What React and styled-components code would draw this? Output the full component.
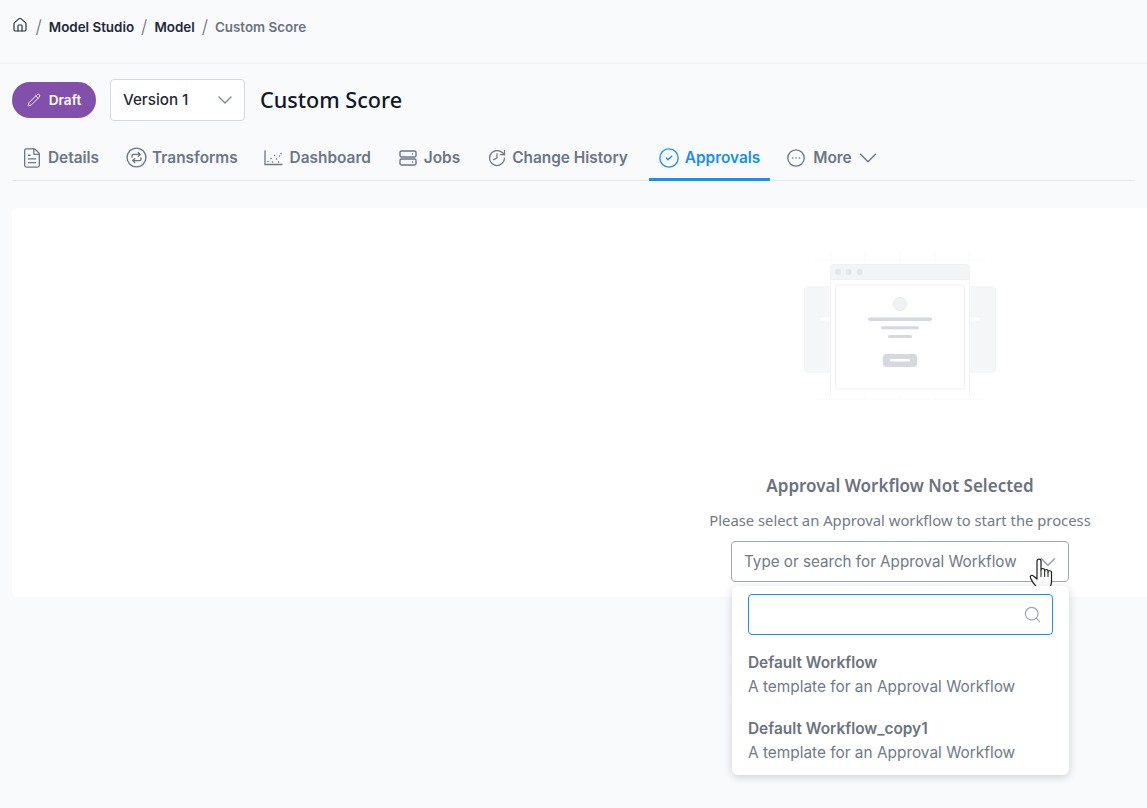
import React from 'react'
import styled, { createGlobalStyle } from 'styled-components'
import { ChevronDown, Search, Home, FileText, History, CircleCheck, Pencil } from 'lucide-react'

const Global = createGlobalStyle`
html,body{margin:0;padding:0;height:100%;overflow:hidden;background:#f9fafc;}
*{box-sizing:border-box;}
body{font-family:Inter,"Liberation Sans",sans-serif;}
`

const Page = styled.div`
width:1147px;
height:808px;
overflow:hidden;
background:#f9fafc;
`
const Breadcrumb = styled.div`
height:64px;
padding:0 12px 10px;
display:flex;
align-items:center;
border-bottom:1px solid #f1f3f6;
font-size:13.4px;
font-weight:600;
color:#1f2937;
`
const HomeLink = styled.span`
display:flex;
margin:-4px 1px 0 -0.5px;
color:#2b3340;
`
const Slash = styled.span`
margin:0 7px;
font-size:18px;
font-weight:300;
color:#6b7280;
`
const Crumb = styled.span`
color:${p => (p.$current ? '#6b7280' : '#1f2937')};
`
const Header = styled.div`
display:flex;
align-items:center;
padding:15px 12px 0;
`
const DraftPill = styled.div`
width:84px;
height:36px;
padding-bottom:1px;
border-radius:18px;
background:#8250ab;
color:#fff;
font-size:13.6px;
font-weight:600;
display:flex;
align-items:center;
justify-content:center;
gap:8px;
`
const VersionSelect = styled.div`
width:135px;
height:42px;
margin-left:14px;
padding:0 7px 1px 12px;
background:#fff;
border:1px solid #d5d9e0;
border-radius:4px;
display:flex;
align-items:center;
justify-content:space-between;
font-size:15.2px;
font-weight:500;
color:#1f2937;
`
const Title = styled.h1`
margin:-2px 0 0 15px;
font-family:"Noto Sans",sans-serif;
font-size:21.6px;
font-weight:500;
color:#111827;
`
const Tabs = styled.div`
display:flex;
height:46px;
margin:14px 12px 0;
border-bottom:1px solid #e3e8ef;
`
const Tab = styled.div`
display:flex;
align-items:center;
gap:${p => p.$gap}px;
height:46px;
padding:2px ${p => p.$pad ?? 12}px 0 ${p => p.$padLeft}px;
font-size:15.4px;
font-weight:600;
white-space:nowrap;
color:${p => (p.$active ? '#1890ee' : '#6b7686')};
border-bottom:3px solid ${p => (p.$active ? '#1890ee' : 'transparent')};
`
const ClockIcon = styled(History)`
transform:scaleX(-1);
`
const MoreChevron = styled(ChevronDown)`
margin-left:-7px;
`
const Card = styled.div`
position:relative;
width:1776px;
height:389px;
margin:27px 0 0 12px;
background:#fff;
border-radius:6px;
display:flex;
flex-direction:column;
align-items:center;
padding-top:42px;
`
const Illustration = styled.svg`
display:block;
width:220px;
height:160px;
`
const EmptyTitle = styled.div`
margin-top:64px;
font-family:"Noto Sans",sans-serif;
font-size:17px;
font-weight:600;
color:#6b7280;
`
const EmptyText = styled.div`
margin-top:13px;
font-family:"Noto Sans",sans-serif;
font-size:14.8px;
color:#727987;
`
const WorkflowSelect = styled.div`
position:relative;
width:338px;
height:41px;
margin-top:11px;
padding:0 7px 0 12px;
background:#fff;
border:1px solid #a3a8b2;
border-radius:4px;
display:flex;
align-items:center;
justify-content:space-between;
font-size:15.2px;
color:#727987;
`
const Cursor = styled.svg`
position:absolute;
left:297px;
top:16px;
width:26px;
height:34px;
`
const Dropdown = styled.div`
position:absolute;
left:0;
top:44px;
width:337px;
height:189px;
padding:8px 16px;
background:#fff;
border-radius:6px;
box-shadow:0 2px 8px rgba(30,40,60,0.2);
z-index:2;
`
const SearchBox = styled.div`
height:41px;
border:1px solid #1890ee;
border-radius:4px;
display:flex;
align-items:center;
justify-content:flex-end;
padding-right:10px;
color:#9aa6b8;
`
const Option = styled.div`
margin-top:${p => p.$top}px;
font-size:15.4px;
line-height:24px;
color:#727987;
b{
  display:block;
  font-size:15.4px;
  font-weight:600;
  color:#6b7280;
}
`

const TransformIcon = () => (
  <svg width="21" height="21" viewBox="0 0 21 21" fill="none" stroke="currentColor" strokeWidth="1.4" strokeLinecap="round" strokeLinejoin="round">
    <circle cx="10.5" cy="10.5" r="9.4" />
    <path d="M6 10V8.8c0-.8.6-1.4 1.4-1.4h6.6M12.3 5.6 14.2 7.4 12.3 9.2" />
    <path d="M15 11v1.2c0 .8-.6 1.4-1.4 1.4H7M8.7 15.4 6.8 13.6 8.7 11.8" />
  </svg>
)
const ChartIcon = () => (
  <svg width="19" height="16" viewBox="0 0 19 16" fill="none" stroke="currentColor" strokeWidth="1.3" strokeLinecap="round">
    <path d="M1 1v13.5h17" />
    <path d="M4 11.5h.1M7 8.5h.1M8.5 12h.1M10.5 5.5h.1M12.5 9h.1M14.5 12h.1M15.5 6h.1M17 3.5h.1" strokeWidth="1.5" />
  </svg>
)
const ServerIcon = () => (
  <svg width="18" height="16" viewBox="0 0 18 16" fill="none" stroke="currentColor" strokeWidth="1.4" strokeLinecap="round">
    <rect x="1" y="1" width="16" height="6" rx="1.4" />
    <rect x="1" y="9" width="16" height="6" rx="1.4" />
    <path d="M13.5 4h.1M13.5 12h.1" strokeWidth="1.6" />
  </svg>
)
const MoreDots = () => (
  <svg width="18" height="18" viewBox="0 0 18 18" fill="none" stroke="currentColor" strokeWidth="1.3" strokeLinecap="round">
    <circle cx="9" cy="9" r="8.2" />
    <path d="M5.6 9h.1M9 9h.1M12.4 9h.1" strokeWidth="1.5" />
  </svg>
)

const EmptyArt = () => (
  <Illustration viewBox="0 0 220 160">
    <path d="M75 0v150M110 0v14M145 0v150M41 0v14M179 0v14M110 140v10M25 10h170M25 149h170" stroke="#f8f9fa" fill="none" />
    <rect x="14" y="36" width="192" height="87" rx="4" fill="#f5f6f7" />
    <rect x="30" y="67.5" width="14" height="3" rx="1.5" fill="#fff" />
    <rect x="176" y="67.5" width="14" height="3" rx="1.5" fill="#fff" />
    <path d="M40.5 145V18.5a4 4 0 0 1 4-4h131a4 4 0 0 1 4 4V145z" fill="#fff" />
    <path d="M40.5 145V18.5a4 4 0 0 1 4-4h131a4 4 0 0 1 4 4V145" fill="none" stroke="#f1f2f4" />
    <path d="M40.5 29.5v-11a4 4 0 0 1 4-4h131a4 4 0 0 1 4 4v11z" fill="#f3f4f6" stroke="#eef0f2" />
    <circle cx="48" cy="22" r="3" fill="#e3e5e9" />
    <circle cx="58.5" cy="22" r="3" fill="#e3e5e9" />
    <circle cx="69.5" cy="22" r="3" fill="#e3e5e9" />
    <rect x="45.5" y="35" width="129" height="104" rx="3" fill="#fff" stroke="#eef0f2" />
    <circle cx="110" cy="54" r="6.5" fill="#f0f1f3" stroke="#e9ebee" />
    <rect x="78" y="67.5" width="64" height="3.4" rx="1.7" fill="#d5d8de" />
    <rect x="91" y="76.2" width="38" height="3" rx="1.5" fill="#d5d8de" />
    <rect x="98" y="85" width="24" height="3" rx="1.5" fill="#d5d8de" />
    <rect x="93" y="104" width="34" height="13" rx="3.5" fill="#d5d8de" />
    <rect x="100" y="109" width="20" height="2.6" rx="1" fill="#fff" />
  </Illustration>
)

const App = () => {
  return (
    <Page>
      <Global />
      <Breadcrumb>
        <HomeLink><Home size={16} strokeWidth={1.8} /></HomeLink>
        <Slash>/</Slash>
        <Crumb>Model Studio</Crumb>
        <Slash>/</Slash>
        <Crumb>Model</Crumb>
        <Slash>/</Slash>
        <Crumb $current>Custom Score</Crumb>
      </Breadcrumb>
      <Header>
        <DraftPill><Pencil size={14} strokeWidth={1.5} />Draft</DraftPill>
        <VersionSelect>Version 1<ChevronDown size={24} strokeWidth={1.4} color="#7d8693" /></VersionSelect>
        <Title>Custom Score</Title>
      </Header>
      <Tabs>
        <Tab $gap={5} $padLeft={9}><FileText size={22} strokeWidth={1.45} />Details</Tab>
        <Tab $gap={5} $padLeft={15}><TransformIcon />Transforms</Tab>
        <Tab $gap={7} $padLeft={14}><ChartIcon />Dashboard</Tab>
        <Tab $gap={7} $padLeft={16}><ServerIcon />Jobs</Tab>
        <Tab $gap={5} $padLeft={15} $pad={21}><ClockIcon size={20} strokeWidth={1.5} />Change History</Tab>
        <Tab $active $gap={5} $padLeft={9} $pad={10}><CircleCheck size={22} strokeWidth={1.45} />Approvals</Tab>
        <Tab $gap={8} $padLeft={17}><MoreDots />More<MoreChevron size={30} strokeWidth={1.1} /></Tab>
      </Tabs>
      <Card>
        <EmptyArt />
        <EmptyTitle>Approval Workflow Not Selected</EmptyTitle>
        <EmptyText>Please select an Approval workflow to start the process</EmptyText>
        <WorkflowSelect>
          Type or search for Approval Workflow
          <ChevronDown size={26} strokeWidth={1.4} color="#9aa0aa" />
          <Cursor viewBox="0 0 26 34">
            <path d="M8 3c0-2.5 4-2.5 4 0v9c0-2 3.5-2 3.5 0l.2 1c0-2 3.3-2 3.3 0v1c0-1.7 3.5-1.7 3.5.3V24c0 4-2 6-3 8H10C8 29 4 26 1.5 20c-1-2.5 1.5-3.5 3-2L8 21z" fill="#fff" stroke="#1c1c1c" strokeWidth="1.2" strokeLinejoin="round" />
            <path d="M12 12v7M15.7 13v6M19 14v5" stroke="#1c1c1c" strokeWidth="1" />
          </Cursor>
          <Dropdown>
            <SearchBox><Search size={19} strokeWidth={1.5} /></SearchBox>
            <Option $top={16}><b>Default Workflow</b>A template for an Approval Workflow</Option>
            <Option $top={18}><b>Default Workflow_copy1</b>A template for an Approval Workflow</Option>
          </Dropdown>
        </WorkflowSelect>
      </Card>
    </Page>
  )
}

export default App
